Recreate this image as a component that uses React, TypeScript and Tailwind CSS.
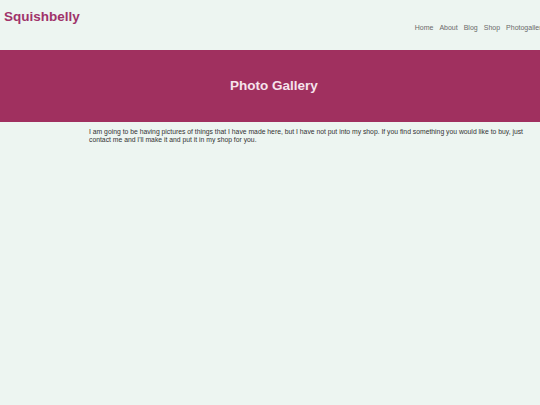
export default function App() {
  const links = ['Home', 'About', 'Blog', 'Shop', 'Photogallery'];
  return (
    <div className="min-h-[405px] w-[540px] overflow-hidden bg-[#edf5f1] font-['Liberation_Sans',Arial,sans-serif]">
      {/* header */}
      <header className="flex h-[50px] items-start justify-between">
        <div className="pl-[4px] pt-[7px] text-[13.5px] font-bold text-[#a0336a]">Squishbelly</div>
        <nav className="flex shrink-0 translate-x-[5px] gap-[6px] pt-[23px] text-[7px] text-[#6a6a6a]">
          {links.map((l) => (
            <a key={l} className="shrink-0">
              {l}
            </a>
          ))}
        </nav>
      </header>

      {/* banner */}
      <section className="flex h-[72px] items-center justify-center bg-[#a0305f] pl-[8px]">
        <h1 className="text-[13.5px] font-bold text-[#f6e3ec]">Photo Gallery</h1>
      </section>

      {/* content */}
      <main className="pl-[89px] pr-[14px] pt-[6px]">
        <p className="text-[6.8px] leading-[8px] text-[#333]">
          I am going to be having pictures of things that I have made here, but I have not put into my shop. If you find something you would like to buy, just contact me and I'll make it and put it in my shop for you.
        </p>
      </main>
    </div>
  );
}
